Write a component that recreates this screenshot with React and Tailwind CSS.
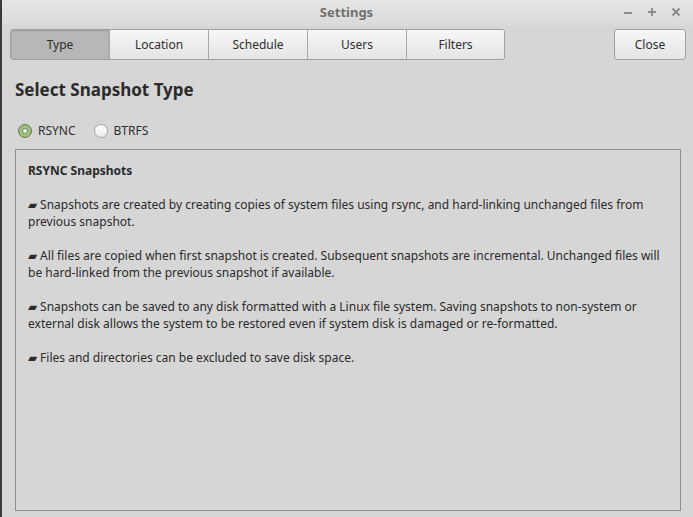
import React from "react";

const tabs = [
  { label: "Type", w: "w-[98px]" },
  { label: "Location", w: "w-[99px]" },
  { label: "Schedule", w: "w-[99px]" },
  { label: "Users", w: "w-[99px]" },
  { label: "Filters", w: "w-[98px]" },
];

const paragraphs = [
  "Snapshots are created by creating copies of system files using rsync, and hard-linking unchanged files from previous snapshot.",
  "All files are copied when first snapshot is created. Subsequent snapshots are incremental. Unchanged files will be hard-linked from the previous snapshot if available.",
  "Snapshots can be saved to any disk formatted with a Linux file system. Saving snapshots to non-system or external disk allows the system to be restored even if system disk is damaged or re-formatted.",
  "Files and directories can be excluded to save disk space.",
];

function Radio({ checked, label }) {
  return (
    <div className="flex items-center gap-[6px]">
      {checked ? (
        <span className="w-[14px] h-[14px] rounded-full border border-[#5f7d45] bg-[#9fbf7f] flex items-center justify-center">
          <span className="w-[6px] h-[6px] rounded-full bg-[#f4f4f4] border border-[#6f8f55]" />
        </span>
      ) : (
        <span className="w-[14px] h-[14px] rounded-full border border-[#a5a5a5] bg-gradient-to-b from-[#ffffff] to-[#ececec]" />
      )}
      <span className="text-[12px] text-[#2f2f2f]">{label}</span>
    </div>
  );
}

export default function App() {
  return (
    <div
      className="w-[693px] h-[517px] flex bg-[#d6d6d6] overflow-hidden"
      style={{ fontFamily: '"Noto Sans", "Open Sans", sans-serif' }}
    >
      {/* left edge */}
      <div className="w-[2px] h-full bg-[#3a3a3a]" />

      <div className="flex-1 flex flex-col">
        {/* TITLE BAR */}
        <div className="relative h-[26px] flex items-center justify-center bg-gradient-to-b from-[#e6e6e6] to-[#d9d9d9]">
          <span className="text-[13px] font-bold text-[#707070] pr-[2px]">Settings</span>
          <div className="absolute right-[11px] top-[6px] flex items-center gap-[12px] text-[#8c8c8c]">
            <svg width="12" height="12" viewBox="0 0 12 12">
              <path d="M2 7h8" stroke="currentColor" strokeWidth="2" />
            </svg>
            <svg width="12" height="12" viewBox="0 0 12 12">
              <path d="M2 6h8M6 2v8" stroke="currentColor" strokeWidth="2" />
            </svg>
            <svg width="12" height="12" viewBox="0 0 12 12">
              <path d="M2.5 2.5l7 7M9.5 2.5l-7 7" stroke="currentColor" strokeWidth="2" />
            </svg>
          </div>
        </div>

        {/* TABS + CLOSE */}
        <div className="mt-[3px] pl-[8px] pr-[7px] flex items-center justify-between">
          <div className="flex h-[31px] rounded-[3px] border border-[#a0a0a0] overflow-hidden">
            {tabs.map((t, i) => (
              <div
                key={t.label}
                className={`${t.w} flex items-center justify-center text-[12px] text-[#2f2f2f] ${
                  i > 0 ? "border-l border-[#a8a8a8]" : ""
                } ${
                  i === 0
                    ? "bg-[#b7b7b7] shadow-[inset_0_1px_2px_rgba(0,0,0,0.15)]"
                    : "bg-gradient-to-b from-[#f7f7f7] to-[#e4e4e4]"
                }`}
              >
                {t.label}
              </div>
            ))}
          </div>
          <div className="w-[72px] h-[31px] rounded-[3px] border border-[#a0a0a0] bg-gradient-to-b from-[#f7f7f7] to-[#e4e4e4] flex items-center justify-center text-[12px] text-[#2f2f2f]">
            Close
          </div>
        </div>

        {/* HEADING */}
        <h1 className="mt-[19px] pl-[13px] text-[17px] leading-[22px] font-bold text-[#2b2b2b]">
          Select Snapshot Type
        </h1>

        {/* RADIOS */}
        <div className="mt-[22px] pl-[16px] flex items-center gap-[18px] h-[16px]">
          <Radio checked label="RSYNC" />
          <Radio label="BTRFS" />
        </div>

        {/* INFO BOX */}
        <div className="mt-[10px] ml-[13px] w-[666px] h-[362px] border border-[#8e8e8e] px-[12px] pt-[12px] text-[12px] leading-[17px] text-[#2b2b2b]">
          <div className="font-bold">RSYNC Snapshots</div>
          {paragraphs.map((p, i) => (
            <p key={i} className="mt-[17px]">
              {"▰ " + p}
            </p>
          ))}
        </div>
      </div>
    </div>
  );
}
